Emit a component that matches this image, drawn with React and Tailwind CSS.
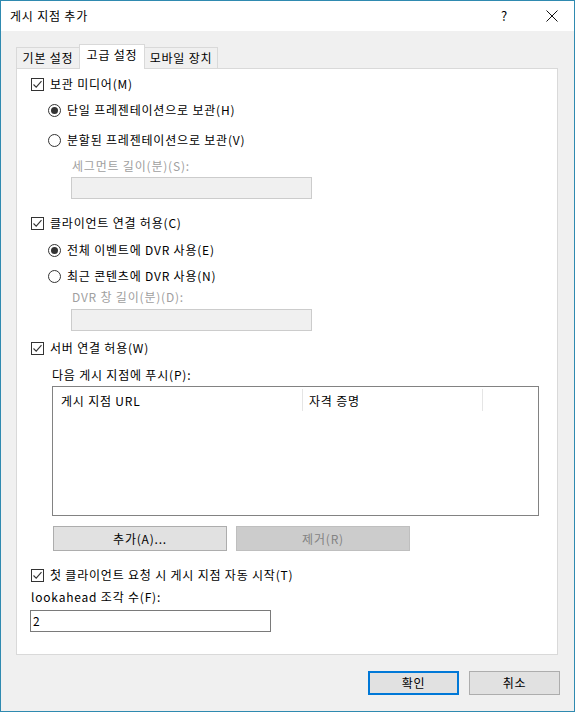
import React from "react";

const font = { fontFamily: '"Noto Sans CJK KR", "Noto Sans", sans-serif' };

function Check() {
  return (
    <svg width="13" height="13" viewBox="0 0 13 13" className="shrink-0">
      <rect x="0.5" y="0.5" width="12" height="12" fill="#fff" stroke="#333" />
      <path d="M2.5 6.5 L5.2 9.2 L10.5 3.2" fill="none" stroke="#333" strokeWidth="1.1" />
    </svg>
  );
}

function Radio({ on }) {
  return (
    <svg width="13" height="13" viewBox="0 0 13 13" className="shrink-0">
      <circle cx="6.5" cy="6.5" r="6" fill="#fff" stroke="#333" />
      {on && <circle cx="6.5" cy="6.5" r="3.5" fill="#333" />}
    </svg>
  );
}

function CheckRow({ label, className }) {
  return (
    <div className={"flex items-center h-[16px] gap-[6px] " + className}>
      <Check />
      <span>{label}</span>
    </div>
  );
}

function RadioRow({ label, on, className }) {
  return (
    <div className={"flex items-center h-[16px] gap-[6px] ml-[17px] " + className}>
      <Radio on={on} />
      <span>{label}</span>
    </div>
  );
}

export default function App() {
  return (
    <div
      className="w-[575px] h-[712px] border border-[#2f8ab0] bg-[#f0f0f0] flex flex-col text-[12px] leading-[16px] tracking-[0.8px] text-black"
      style={font}
    >
      {/* title bar */}
      <div className="h-[30px] bg-white flex items-center shrink-0">
        <span className="ml-[9px]">게시 지점 추가</span>
        <div className="ml-auto flex items-center">
          <span className="mr-[38px] text-[13px]">?</span>
          <svg width="12" height="12" viewBox="0 0 12 12" className="mr-[16px]">
            <path d="M0.5 0.5 L11.5 11.5 M11.5 0.5 L0.5 11.5" stroke="#111" strokeWidth="1" />
          </svg>
        </div>
      </div>

      <div className="pl-[15px] pr-[15px] flex flex-col">
        {/* tabs */}
        <div className="flex items-end h-[24px] mt-[13px] relative z-10">
          <div className="h-[21px] w-[64px] border border-b-0 border-[#d9d9d9] bg-[#f0f0f0] flex items-center justify-center">
            기본 설정
          </div>
          <div className="w-[66px] border border-b-0 border-[#d9d9d9] bg-white flex items-start pt-[2px] justify-center -mb-[1px] -ml-[1px] h-[25px]">
            고급 설정
          </div>
          <div className="h-[21px] w-[73px] border border-b-0 border-l-0 border-[#d9d9d9] bg-[#f0f0f0] flex items-center justify-center">
            모바일 장치
          </div>
        </div>

        {/* panel */}
        <div className="h-[587px] w-[542px] border border-[#d9d9d9] bg-white flex flex-col pl-[14px]">
          <CheckRow label="보관 미디어(M)" className="mt-[7px]" />
          <RadioRow label="단일 프레젠테이션으로 보관(H)" on className="mt-[10px]" />
          <RadioRow label="분할된 프레젠테이션으로 보관(V)" className="mt-[14px]" />
          <div className="h-[16px] mt-[10px] ml-[41px] text-[#a0a0a0]">세그먼트 길이(분)(S):</div>
          <div className="h-[22px] w-[241px] mt-[3px] ml-[40px] border border-[#cccccc] bg-[#f0f0f0]" />

          <CheckRow label="클라이언트 연결 허용(C)" className="mt-[16px]" />
          <RadioRow label="전체 이벤트에 DVR 사용(E)" on className="mt-[11px]" />
          <RadioRow label="최근 콘텐츠에 DVR 사용(N)" className="mt-[10px]" />
          <div className="h-[16px] mt-[5px] ml-[41px] text-[#a0a0a0]">DVR 창 길이(분)(D):</div>
          <div className="h-[22px] w-[241px] mt-[4px] ml-[40px] border border-[#cccccc] bg-[#f0f0f0]" />

          <CheckRow label="서버 연결 허용(W)" className="mt-[9px]" />
          <div className="h-[16px] mt-[11px] ml-[21px]">다음 게시 지점에 푸시(P):</div>
          <div className="h-[130px] w-[487px] mt-[3px] ml-[21px] border border-[#828282] bg-white flex flex-col">
            <div className="flex h-[24px] items-stretch">
              <div className="w-[250px] border-r border-[#e5e5e5] pl-[8px] pt-[4px] mt-[2px]">게시 지점 URL</div>
              <div className="w-[180px] border-r border-[#e5e5e5] pl-[6px] pt-[4px] mt-[2px]">자격 증명</div>
            </div>
          </div>
          <div className="flex gap-[9px] mt-[10px] ml-[22px]">
            <div className="h-[25px] w-[174px] border border-[#adadad] bg-[#e1e1e1] flex items-center justify-center">
              추가(A)...
            </div>
            <div className="h-[25px] w-[174px] border border-[#bfbfbf] bg-[#cccccc] flex items-center justify-center text-[#838383]">
              제거(R)
            </div>
          </div>

          <CheckRow label="첫 클라이언트 요청 시 게시 지점 자동 시작(T)" className="mt-[16px]" />
          <div className="h-[16px] mt-[6px]">lookahead 조각 수(F):</div>
          <div className="h-[22px] w-[241px] mt-[5px] -ml-[1px] border border-[#7a7a7a] bg-white flex items-center pl-[2px]">
            2
          </div>
        </div>

        {/* bottom buttons */}
        <div className="flex justify-end gap-[10px] mt-[16px]">
          <div className="h-[24px] w-[91px] border-2 border-[#0078d7] bg-[#e1e1e1] flex items-center justify-center">
            확인
          </div>
          <div className="h-[24px] w-[91px] border border-[#adadad] bg-[#e1e1e1] flex items-center justify-center mr-[-1px]">
            취소
          </div>
        </div>
      </div>
    </div>
  );
}
